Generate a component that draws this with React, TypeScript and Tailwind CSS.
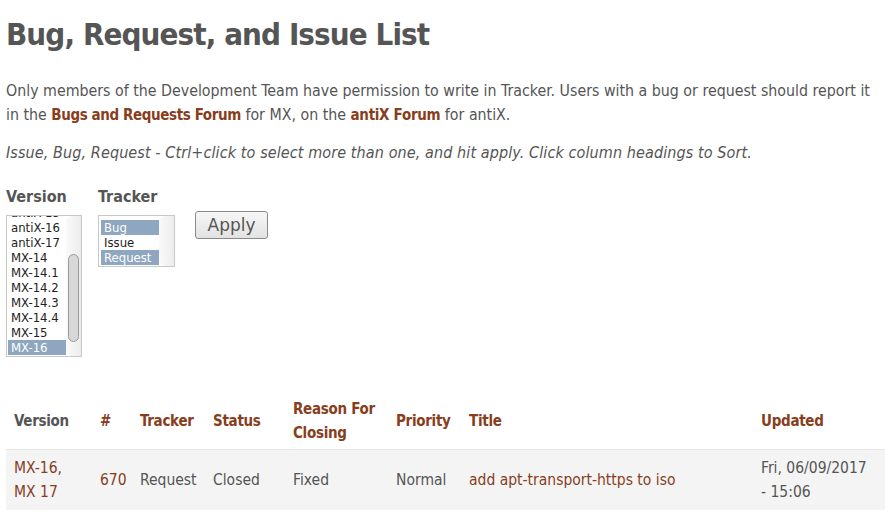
const font = { fontFamily: '"DejaVu Sans Condensed", "DejaVu Sans", sans-serif' };
const listFont = { fontFamily: '"DejaVu Sans Condensed", "DejaVu Sans", sans-serif' };

const versions = ['antiX-15', 'antiX-16', 'antiX-17', 'MX-14', 'MX-14.1', 'MX-14.2', 'MX-14.3', 'MX-14.4', 'MX-15', 'MX-16'];
const trackers = [
  { name: 'Bug', selected: true },
  { name: 'Issue', selected: false },
  { name: 'Request', selected: true },
];

const cols = [
  { label: 'Version', w: 'w-[86px]', link: false },
  { label: '#', w: 'w-[40px]', link: true },
  { label: 'Tracker', w: 'w-[73px]', link: true },
  { label: 'Status', w: 'w-[80px]', link: true },
  { label: 'Reason For Closing', w: 'w-[103px]', link: true },
  { label: 'Priority', w: 'w-[73px]', link: true },
  { label: 'Title', w: 'w-[292px]', link: true },
  { label: 'Updated', w: 'w-[132px]', link: true },
];

export default function App() {
  return (
    <div className="bg-white text-[#555] px-[6px] pt-[15px]" style={font}>
      <h1 className="text-[31px] font-bold leading-[38px] tracking-[-0.9px] text-[#555]">Bug, Request, and Issue List</h1>

      <p className="mt-[26px] text-[15.8px] leading-[24px]">
        Only members of the Development Team have permission to write in Tracker. Users with a bug or request should report it in the{' '}
        <a className="font-bold text-[#873e1c] text-[15px] tracking-[-0.4px]">Bugs and Requests Forum</a> for MX, on the{' '}
        <a className="font-bold text-[#873e1c] text-[15px] tracking-[-0.3px]">antiX Forum</a> for antiX.
      </p>
      <p className="mt-[14px] text-[16px] leading-[24px] tracking-[0.1px] italic">
        Issue, Bug, Request - Ctrl+click to select more than one, and hit apply. Click column headings to Sort.
      </p>

      <div className="mt-[22px] flex items-start">
        <div className="w-[92px]">
          <div className="text-[16px] font-bold leading-[20px]">Version</div>
          <div className="mt-[8px] w-[76px] h-[142px] border border-[#c8c8c8] flex overflow-hidden bg-white">
            <div className="flex-1 pl-[1px] text-[13px] leading-[15px] text-[#222] overflow-hidden" style={listFont}>
              <div className="-mt-[11px]">
                {versions.map((v, i) => (
                  <div key={v} className={i === versions.length - 1 ? 'bg-[#8ea6bf] text-white pl-[3px]' : 'pl-[3px]'}>{v}</div>
                ))}
              </div>
            </div>
            <div className="w-[15px] shrink-0 bg-gradient-to-r from-[#fafafa] to-[#ececec] rounded-l-[6px] flex flex-col pt-[38px] pb-[14px] px-[2px]">
              <div className="flex-1 rounded-full border border-[#9a9a9a] bg-[#d8d8d8]" />
            </div>
          </div>
        </div>
        <div className="w-[97px]">
          <div className="text-[16px] font-bold leading-[20px]">Tracker</div>
          <div className="mt-[8px] w-[77px] h-[52px] border border-[#c8c8c8] flex overflow-hidden bg-white">
            <div className="flex-1 pl-[2px] pt-[4px] text-[13px] leading-[15px] text-[#222]" style={listFont}>
              {trackers.map((t) => (
                <div key={t.name} className={t.selected ? 'bg-[#8ea6bf] text-white pl-[3px]' : 'pl-[3px]'}>{t.name}</div>
              ))}
            </div>
            <div className="w-[15px] shrink-0 bg-gradient-to-r from-[#fafafa] to-[#ececec] rounded-l-[6px]" />
          </div>
        </div>
        <button
          className="mt-[24px] w-[73px] h-[28px] border border-[#8a8a8a] rounded-[3px] bg-gradient-to-b from-[#f7f7f7] to-[#e2e2e2] text-[17px] text-[#555] leading-[20px]"
          style={{ fontFamily: '"DejaVu Sans", sans-serif' }}
        >
          Apply
        </button>
      </div>

      <table className="mt-[36px] w-[879px] border-collapse text-[15.5px] leading-[24px]">
        <thead>
          <tr className="text-[15px]">
            {cols.map((c) => (
              <th key={c.label} className={`${c.w} pl-[8px] pr-[4px] py-[4px] text-left align-middle font-bold tracking-[-0.3px] ${c.link ? 'text-[#873e1c]' : 'text-[#555]'}`}>
                {c.label}
              </th>
            ))}
          </tr>
        </thead>
        <tbody>
          <tr className="bg-[#f4f4f4] border-t border-[#e6e6e6]">
            <td className="pl-[8px] py-[6px] text-[#873e1c]">MX-16,<br />MX 17</td>
            <td className="pl-[8px] py-[6px] text-[#873e1c]">670</td>
            <td className="pl-[8px] py-[6px]">Request</td>
            <td className="pl-[8px] py-[6px]">Closed</td>
            <td className="pl-[8px] py-[6px]">Fixed</td>
            <td className="pl-[8px] py-[6px]">Normal</td>
            <td className="pl-[8px] py-[6px] text-[#873e1c]">add apt-transport-https to iso</td>
            <td className="pl-[8px] pr-[18px] py-[6px]">Fri, 06/09/2017 - 15:06</td>
          </tr>
        </tbody>
      </table>
    </div>
  );
}
